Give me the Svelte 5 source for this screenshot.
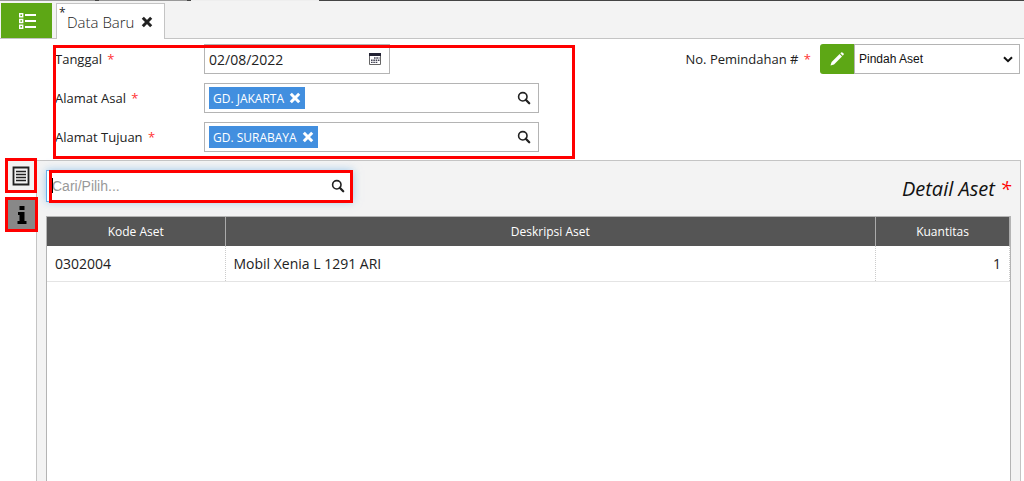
<script>
	let tanggal = $state('02/08/2022');
	let cari = $state('');
	let jenis = $state('Pindah Aset');

	let alamat = $state([
		{ id: 'asal', label: 'Alamat Asal', tag: 'GD. JAKARTA' },
		{ id: 'tujuan', label: 'Alamat Tujuan', tag: 'GD. SURABAYA' }
	]);

	const details = [
		{ kode: '0302004', deskripsi: 'Mobil Xenia L 1291 ARI', kuantitas: 1 }
	];

	function removeTag(item) {
		item.tag = '';
	}
</script>

{#snippet searchIcon()}
	<svg width="14" height="14" viewBox="0 0 14 14">
		<circle cx="5.8" cy="5.8" r="4.2" fill="none" stroke="#222" stroke-width="1.6" />
		<path d="M8.8 8.8 L12.2 12.2" stroke="#222" stroke-width="2.3" stroke-linecap="round" />
	</svg>
{/snippet}

{#snippet closeIcon()}
	<svg width="12" height="12" viewBox="0 0 12 12">
		<path d="M1.8 1.8 L10.2 10.2 M10.2 1.8 L1.8 10.2" stroke="currentColor" stroke-width="3" />
	</svg>
{/snippet}

<div class="page">
	<header>
		<!-- bottom edge of the window above -->
		<div class="strip"><i></i><i></i><i></i></div>
		<nav>
			<button class="list" aria-label="Daftar">
				<svg width="18" height="18" viewBox="0 0 18 18" fill="none" stroke="#fff">
					<path d="M1.7 1.7h3v3h-3z M1.7 7.5h3v3h-3z M1.7 13.3h3v3h-3z" stroke-width="1.4" />
					<path d="M7 3h11 M7 9h11 M7 15h11" stroke-width="1.8" />
				</svg>
			</button>
			<div class="tab">
				<span class="changed">*</span>
				<span>Data Baru</span>
				<button aria-label="Tutup">{@render closeIcon()}</button>
			</div>
		</nav>
	</header>

	<div class="form">
		<div class="fields">
			<div class="field">
				<label for="tanggal">Tanggal <b>*</b></label>
				<div class="box date">
					<input id="tanggal" bind:value={tanggal} />
					<button aria-label="Kalender">
						<svg width="14" height="14" viewBox="0 0 14 14">
							<path d="M1.5 1.5h11v11h-11z" fill="#fff" stroke="#666" />
							<path d="M1 1h12v3H1z" fill="#223" />
							<path d="M6 6h5.5 M3 8.2h8.5 M3 10.4h7" stroke="#445" stroke-width="1.4" stroke-dasharray="1.6 0.7" />
						</svg>
					</button>
				</div>
			</div>
			{#each alamat as item}
				<div class="field">
					<label for={item.id}>{item.label} <b>*</b></label>
					<div class="box">
						{#if item.tag}
							<span class="tag">
								{item.tag}
								<button aria-label="Hapus" onclick={() => removeTag(item)}>{@render closeIcon()}</button>
							</span>
						{/if}
						<input id={item.id} />
						<button aria-label="Cari">{@render searchIcon()}</button>
					</div>
				</div>
			{/each}
			<div class="mark"></div>
		</div>

		<div class="number">
			<label for="jenis">No. Pemindahan # <b>*</b></label>
			<button class="edit" aria-label="Ubah">
				<svg width="16" height="16" viewBox="0 0 16 16" fill="#fff">
					<path d="M1.5 14.5 L2.6 11 L10.6 3 L13 5.4 L5 13.4 Z" />
					<path d="M11.3 2.3 L12.2 1.4 Q12.8 .9 13.4 1.4 L14.6 2.6 Q15.1 3.2 14.6 3.8 L13.7 4.7 Z" />
				</svg>
			</button>
			<div class="select">
				<select id="jenis" bind:value={jenis}>
					<option>Pindah Aset</option>
				</select>
				<svg width="10" height="7" viewBox="0 0 10 7">
					<path d="M1 1.2 L5 5.2 L9 1.2" fill="none" stroke="#111" stroke-width="2" />
				</svg>
			</div>
		</div>
	</div>

	<main>
		<aside>
			<button class="side" aria-label="Detail">
				<svg width="18" height="20" viewBox="0 0 18 20" fill="none" stroke="#222">
					<path d="M1.5 1.5h15v17h-15z" stroke-width="1.8" />
					<path d="M4 5.5h10 M4 8.5h10 M4 11.5h10 M4 14.5h10" stroke-width="1.3" />
				</svg>
			</button>
			<button class="side active" aria-label="Info">
				<svg width="10" height="20" viewBox="0 0 10 20" fill="#000">
					<path d="M2.5 1h5v4h-5z M1 7h6.5v9H9.5v3H.5v-3h2v-6H1z" />
				</svg>
			</button>
		</aside>
		<section>
			<div class="toolbar">
				<div class="search">
					<input placeholder="Cari/Pilih..." aria-label="Cari/Pilih" bind:value={cari} />
					<button aria-label="Cari">{@render searchIcon()}</button>
					<span class="caret"></span>
					<div class="mark"></div>
				</div>
				<h2>Detail Aset <b>*</b></h2>
			</div>
			<div class="grid">
				<table>
					<thead>
						<tr>
							<th class="kode">Kode Aset</th>
							<th>Deskripsi Aset</th>
							<th class="qty">Kuantitas</th>
						</tr>
					</thead>
					<tbody>
						{#each details as row}
							<tr>
								<td>{row.kode}</td>
								<td>{row.deskripsi}</td>
								<td class="right">{row.kuantitas}</td>
							</tr>
						{/each}
					</tbody>
				</table>
			</div>
		</section>
	</main>
</div>

<style>
	:global(body) {
		margin: 0;
	}

	.page {
		display: flex;
		flex-direction: column;
		height: 100vh;
		overflow: hidden;
		background: #fff;
		color: #222;
		font-family: 'Segoe UI', 'Open Sans', sans-serif;
		font-size: 13px;
	}

	.page * {
		box-sizing: border-box;
	}

	button {
		display: flex;
		align-items: center;
		justify-content: center;
		padding: 0;
		border: 0;
		background: none;
		color: inherit;
		cursor: pointer;
	}

	input {
		flex: 1;
		min-width: 0;
		padding: 0;
		border: 0;
		outline: 0;
		background: none;
		color: #222;
		font: inherit;
	}

	b {
		color: #f33;
		font-weight: 400;
	}

	label b {
		margin-left: 2px;
	}

	header {
		background: #f3f3f3;
		border-bottom: 1px solid #c4c4c4;
	}

	.strip {
		display: grid;
		grid-template-columns: 95px 88px 128px;
		gap: 4px;
		height: 1px;
		background: #444;
	}

	.strip i {
		background: #999;
	}

	.strip i:last-child {
		background: #eee;
	}

	nav {
		display: flex;
		align-items: flex-end;
		gap: 4px;
		height: 37px;
		padding: 0 1px;
	}

	.list {
		width: 51px;
		height: 35px;
		background: #5da715;
	}

	.tab {
		position: relative;
		display: flex;
		align-items: center;
		gap: 7px;
		height: 36px;
		margin-bottom: -1px;
		padding: 0 11px 0 10px;
		border: 1px solid #c4c4c4;
		border-bottom: 0;
		background: #fff;
		font-size: 15px;
		font-weight: 300;
	}

	.changed {
		position: absolute;
		top: 2px;
		left: 2px;
		font-size: 12px;
		font-weight: 400;
		line-height: 14px;
	}

	.form {
		display: flex;
		justify-content: space-between;
		align-items: flex-start;
		padding: 5px 4px 8px 53px;
	}

	.fields {
		position: relative;
		display: flex;
		flex-direction: column;
		gap: 9px;
		width: 522px;
		padding: 0 2px;
	}

	.mark {
		position: absolute;
		inset: 1px 0 -7px;
		border: 3px solid #f00;
		pointer-events: none;
	}

	.field {
		display: flex;
		align-items: center;
	}

	.field label {
		width: 149px;
	}

	.box {
		display: flex;
		align-items: center;
		width: 335px;
		height: 30px;
		padding: 0 7px 0 4px;
		border: 1px solid #b4b4b4;
	}

	.date {
		width: 186px;
		font-size: 14px;
	}

	.tag {
		display: flex;
		align-items: center;
		gap: 5px;
		height: 22px;
		padding: 0 4px;
		background: #428fdf;
		color: #fff;
		font-size: 12px;
	}

	.number {
		display: flex;
		align-items: center;
	}

	.number label {
		margin-right: 9px;
	}

	.edit {
		width: 34px;
		height: 30px;
		border-radius: 3px 0 0 3px;
		background: #5da715;
	}

	.select {
		position: relative;
		width: 166px;
	}

	select {
		width: 100%;
		height: 30px;
		padding: 0 4px;
		border: 1px solid #b4b4b4;
		border-radius: 0;
		background: #fff;
		color: #111;
		font: 12px 'Liberation Sans', sans-serif;
		appearance: none;
	}

	.select svg {
		position: absolute;
		top: 12px;
		right: 7px;
		pointer-events: none;
	}

	main {
		display: flex;
		flex: 1;
		min-height: 0;
		padding-right: 3px;
	}

	aside {
		display: flex;
		flex-direction: column;
		gap: 4px;
		width: 36px;
		margin-top: -2px;
		padding-left: 5px;
	}

	.side {
		position: relative;
		z-index: 1;
		flex: none;
		width: 32px;
		height: 35px;
		border: 3px solid #f00;
		background: #f3f3f3;
	}

	.active {
		width: 33px;
		background: #888;
	}

	section {
		display: flex;
		flex: 1;
		flex-direction: column;
		min-width: 0;
		padding: 9px 9px 0;
		border: 1px solid #c4c4c4;
		border-bottom: 0;
		background: #f3f3f3;
	}

	.toolbar {
		display: flex;
		justify-content: space-between;
		align-items: flex-start;
		height: 46px;
	}

	.search {
		position: relative;
		display: flex;
		align-items: center;
		width: 307px;
		height: 32px;
		padding: 0 7px 0 5px;
		border: 1px solid #66afe9;
		background: #fff;
		box-shadow: 0 0 8px rgba(102, 175, 233, 0.6);
		font: 14px 'Liberation Sans', sans-serif;
	}

	.search .mark {
		inset: -1px -1px -2px 2px;
	}

	.search input::placeholder {
		color: #999;
	}

	.caret {
		position: absolute;
		top: 7px;
		left: 5px;
		width: 1px;
		height: 15px;
		background: #000;
	}

	h2 {
		margin: 5px 0 0;
		color: #111;
		font-size: 20px;
		font-style: italic;
		font-weight: 400;
		line-height: 28px;
	}

	h2 b {
		color: #f00;
	}

	.grid {
		flex: 1;
		border: 1px solid #b4b4b4;
		border-bottom: 0;
		background: #fff;
	}

	table {
		width: 100%;
		border-collapse: collapse;
		table-layout: fixed;
	}

	th {
		height: 29px;
		padding: 0;
		border-right: 1px solid #aaa;
		background: #555;
		color: #fff;
		font-size: 12px;
		font-weight: 400;
	}

	.kode {
		width: 178px;
	}

	.qty {
		width: 134px;
	}

	td {
		height: 35px;
		padding: 0 8px;
		border-right: 1px dotted #ccc;
		border-bottom: 1px solid #e4e4e4;
		font-size: 14px;
	}

	.right {
		text-align: right;
	}
</style>
